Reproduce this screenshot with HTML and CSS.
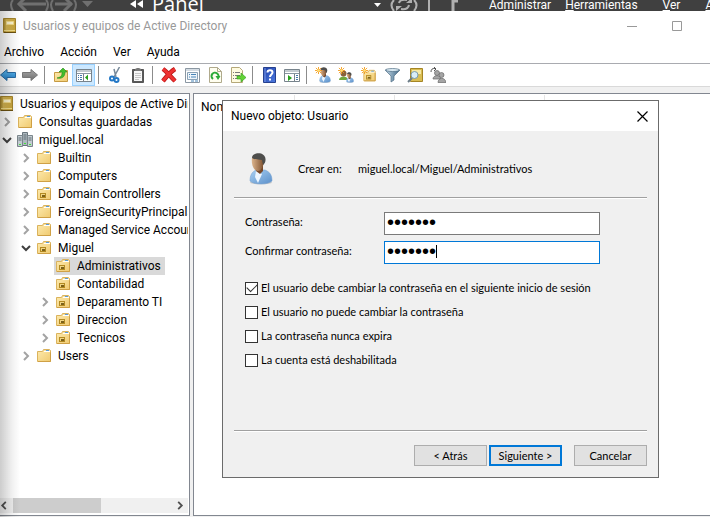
FILE: index.html
```html
<!DOCTYPE html>
<html lang="es">
<head>
<meta charset="utf-8">
<title>Usuarios y equipos de Active Directory</title>
<link rel="stylesheet" href="styles.css">
</head>
<body>
<svg class="defs" aria-hidden="true">
  <defs>
    <linearGradient id="gFolder" x1="0" y1="0" x2="1" y2="1"><stop offset="0" stop-color="#fdebb0"/><stop offset="1" stop-color="#f0ca70"/></linearGradient>
    <linearGradient id="gBook" x1="0" y1="0" x2="1" y2="0"><stop offset="0" stop-color="#a98a2c"/><stop offset=".25" stop-color="#d9b955"/><stop offset="1" stop-color="#c9a53c"/></linearGradient>
    <linearGradient id="gShirt" x1="0" y1="0" x2="1" y2="1"><stop offset="0" stop-color="#a9d0f2"/><stop offset="1" stop-color="#5a8fca"/></linearGradient>
    <linearGradient id="gFace" x1="0" y1="0" x2="1" y2="0"><stop offset="0" stop-color="#dcb48c"/><stop offset="1" stop-color="#7c4e2c"/></linearGradient>
    <linearGradient id="gBlue" x1="0" y1="0" x2="0" y2="1"><stop offset="0" stop-color="#64c0f5"/><stop offset="1" stop-color="#1e78c2"/></linearGradient>
    <linearGradient id="gGrey" x1="0" y1="0" x2="0" y2="1"><stop offset="0" stop-color="#a9a9a9"/><stop offset="1" stop-color="#6e6e6e"/></linearGradient>
    <linearGradient id="gHelp" x1="0" y1="0" x2="1" y2="1"><stop offset="0" stop-color="#1d3fa8"/><stop offset="1" stop-color="#4f7be0"/></linearGradient>
    <linearGradient id="gFunnel" x1="0" y1="0" x2="1" y2="0"><stop offset="0" stop-color="#c6dcea"/><stop offset="1" stop-color="#3d6482"/></linearGradient>
  </defs>
  <symbol id="folder" viewBox="0 0 16 16"><path d="M1.500 3.500h5l1-2h6l1 1v11h-13z" fill="url(#gFolder)" stroke="#dbb35c"/><path d="M8 3.500h6" stroke="#fff"/><path d="M10 2.500h3" stroke="#5b9ad6"/><path d="M2 13.500h12.500v-9" fill="none" stroke="#cfa045"/></symbol>
  <symbol id="ou" viewBox="0 0 16 16"><use href="#folder"/><path d="M4 7h6v5H4z" fill="#b38a22"/><path d="M5 8h4v3H5z" fill="#f0d584"/><path d="M6 9h3v2H6z" fill="#7c611a"/></symbol>
  <symbol id="book" viewBox="0 0 14 16"><path d="M.500.5h12v14h-12z" fill="url(#gBook)" stroke="#a5852c"/><path d="M3.500 3.500h7v3h-7z" fill="#fff7d0" stroke="#f3dc8c"/><path d="M1 12.500h11" stroke="#f5e08c"/><path d="M1 14.500h12" stroke="#6c5210"/></symbol>
  <symbol id="domain" viewBox="0 0 16 16"><path d="M5.500.5h5v13h-5z" fill="#aeb9bf" stroke="#69757c"/><path d="M.5 3.500h5v11h-5zM10.500 3.500h5v11h-5z" fill="#c3ccd1" stroke="#7b868c"/><path d="M6.500 3h3M6.500 5h3M6.500 7h3M1.500 6h3M1.500 8h3M11.500 6h3M11.500 8h3" stroke="#5c6a72"/><path d="M2 12h2v1H2zM7 11h2v1H7zM12 12h2v1h-2z" fill="#41e03a"/></symbol>
  <symbol id="right" viewBox="0 0 14 10"><path d="M5 1l4 4-4 4" fill="none" stroke="#a3a3a3" stroke-width="2"/></symbol>
  <symbol id="down" viewBox="0 0 14 10"><path d="M3 3l4 4 4-4" fill="none" stroke="#404040" stroke-width="2"/></symbol>
  <symbol id="person" viewBox="0 0 24 32"><ellipse cx="12" cy="29.500" rx="11" ry="1.800" fill="#c9c9c9"/><path d="M1 28c0-6 2-9 6-11h9c5 2 7 5 7 11-4 4-18 4-22 0z" fill="url(#gShirt)" stroke="#6f9dce" stroke-width=".5"/><path d="M7 18l6 3-4 9-3-6z" fill="#edf6ff"/><path d="M6 13h8v5l-3 3-4-3z" fill="#77492a"/><path d="M3 5c2-3 12-3 12 2 0 6-3 11-6 11-4 0-7-6-6-13z" fill="url(#gFace)"/><path d="M3 5c0-6 13-7 13.500 1 .3 3-1 5-2.500 6l-1-5c-3-1-7 0-10-2z" fill="#4e4e4c"/></symbol>
  <symbol id="star" viewBox="0 0 8 8"><path d="M4 0v8M0 4h8M1 1l6 6M7 1L1 7" stroke="#f39a1c" stroke-width="1"/><circle cx="4" cy="4" r="1.500" fill="#ffe27a"/></symbol>
</svg>

<div class="desktop">
  <header class="server">
    <svg class="server-nav" viewBox="0 0 110 11" aria-hidden="true"><g fill="none" stroke="#707070" stroke-width="2"><path d="M13 0q-4 4 0 11M46 0q4 4 0 11M53 0q-4 4 0 11M74 0q4 4 0 11"/><path d="M19 4h27M55 4h17" stroke-width="3"/><path d="M26-3l-7 7 7 7M64-3l7 7-7 7" stroke-width="3"/></g><path d="M82 1h11l-5.500 6z" fill="#707070"/></svg>
    <svg class="server-back" viewBox="0 0 14 8" aria-hidden="true"><path d="M6 0v8L0 4zM13 0v8L7 4z" fill="#fff"/></svg>
    <span class="server-title">Panel</span>
    <svg class="server-tools" viewBox="0 0 110 11" aria-hidden="true"><path d="M9 3h7l-3.500 4z" fill="#fff"/><g fill="none" stroke="#b0b0b0" stroke-width="2"><path d="M29 0q-5 5 0 11M49 0q5 5 0 11M34 3q1-4 8-3M44 5q-1 5-8 4"/><path d="M64 0v11" /><path d="M88 0v11M87 1h6" stroke-width="3"/></g><path d="M41 3h6V-2zM37 6h-6v5z" fill="#b0b0b0"/></svg>
    <nav class="server-menu"><a href="#">Ad<u>m</u>inistrar</a><a href="#"><u>H</u>erramientas</a><a href="#"><u>V</u>er</a><a href="#"><u>A</u>yuda</a></nav>
  </header>

  <main class="window">
    <div class="titlebar">
      <svg class="title-icon" aria-hidden="true"><use href="#book"/></svg>
      <h1>Usuarios y equipos de Active Directory</h1>
      <button class="winbtn" aria-label="Minimizar"><svg viewBox="0 0 10 10"><path d="M0 5.500h10" stroke="#999"/></svg></button>
      <button class="winbtn" aria-label="Maximizar"><svg viewBox="0 0 10 10"><path d="M.5.5h9v9h-9z" fill="none" stroke="#999"/></svg></button>
    </div>
    <nav class="menubar"><a href="#">Archivo</a><a href="#">Acción</a><a href="#">Ver</a><a href="#">Ayuda</a></nav>
    <div class="toolbar">
      <button aria-label="Atrás"><svg viewBox="0 0 16 16"><path d="M.5 8L7 2.500v3h8.500v5H7v3z" fill="url(#gBlue)" stroke="#2b6ca3"/></svg></button>
      <button aria-label="Adelante"><svg viewBox="0 0 16 16"><path d="M15.500 8L9 2.500v3H.5v5H9v3z" fill="url(#gGrey)" stroke="#777"/></svg></button>
      <i class="sep"></i>
      <button aria-label="Subir un nivel"><svg viewBox="0 0 16 16"><path d="M1.500 5.500h6l1-2h6v11h-13z" fill="url(#gFolder)" stroke="#c69a42"/><path d="M4 11c5-1 5-3 5-6H6l4-4L14 5h-2c0 5-3 7-8 6z" fill="#43bd2c" stroke="#248c17" stroke-width=".6"/></svg></button>
      <button class="on" aria-label="Mostrar árbol"><svg viewBox="0 0 16 16"><path d="M.5 2.500h15v12H.5z" fill="#fff" stroke="#77838c"/><path d="M1 4h14M1 6.500h14" stroke="#8796a2"/><path d="M7.500 7v7" stroke="#77838c"/><path d="M2 8.500h1m1 0h2M2 10.500h1m1 0h2M2 12.500h1m1 0h2" stroke="#4478ab"/><path d="M12 7.500v6l-3-3z" fill="#28a11c"/></svg></button>
      <i class="sep"></i>
      <button aria-label="Cortar"><svg viewBox="0 0 16 16"><path d="M12.500 0L7 10M7 2l2 8" stroke="#77899a" stroke-width="1.500"/><g fill="none" stroke="#2478c6" stroke-width="2"><circle cx="5" cy="11.500" r="2"/><circle cx="9.500" cy="13" r="2"/></g></svg></button>
      <button aria-label="Pegar"><svg viewBox="0 0 16 16"><path d="M2.500 2.500h11v13h-11z" fill="#5a5a5a" stroke="#555"/><path d="M4 4h8v10H4z" fill="#f6f6f6"/><path d="M5 4V2l2-1h2l2 1v2z" fill="#777"/><path d="M5 6.500h6M5 8.500h6M5 10.500h6M5 12.500h4" stroke="#c5c5c5"/></svg></button>
      <i class="sep"></i>
      <button aria-label="Eliminar"><svg viewBox="0 0 16 16"><path d="M2 2c4 3 7 7 12 12M14 2C9 5 6 9 2 14" stroke="#b81616" stroke-width="4.500" fill="none"/><path d="M2 2c4 3 7 7 12 12M14 2C9 5 6 9 2 14" stroke="#ed3131" stroke-width="3" fill="none"/></svg></button>
      <button aria-label="Propiedades"><svg viewBox="0 0 16 16"><path d="M1.500 1.500h14v14h-14z" fill="#fff" stroke="#8b97a2"/><path d="M2 3h13" stroke="#aabac8"/><path d="M3.500 5.500h10v7h-10z" fill="#eef5fb" stroke="#8aa2b6"/><path d="M5 7.500h1m1 0h5M5 10h1m1 0h5" stroke="#4784b8"/><path d="M7 14h3m1 0h3" stroke="#4784b8"/></svg></button>
      <button aria-label="Actualizar"><svg viewBox="0 0 16 16"><path d="M2.500.5h8l4 4v11h-12z" fill="#fffef0" stroke="#b0aa8c"/><path d="M10.500.5v4h4" fill="none" stroke="#b0aa8c"/><path d="M6 12a3.500 3.500 0 1 1 5-1" fill="none" stroke="#2cab38" stroke-width="2"/><path d="M8.500 9h5L11 13z" fill="#2cab38"/></svg></button>
      <button aria-label="Exportar lista"><svg viewBox="0 0 16 16"><path d="M1.500.5h8l3 3v12h-11z" fill="#fffbe0" stroke="#b5a878"/><path d="M3 5.500h1m1 0h5M3 8.500h1m1 0h5M3 11.500h1m1 0h5" stroke="#79797a"/><path d="M7 9h4V6l5 4.500-5 4.500v-3H7z" fill="#63d337" stroke="#2f9c1c" stroke-width=".6"/></svg></button>
      <i class="sep"></i>
      <button aria-label="Ayuda"><svg viewBox="0 0 16 16"><path d="M2.500.5h12v15h-12z" fill="url(#gHelp)" stroke="#26418f"/><path d="M4 1v14" stroke="#7d9be8"/><path d="M6.500 5.500c0-3 5-3 5 0 0 2-2.500 2-2.500 4.500M9 11.500v2" fill="none" stroke="#fff" stroke-width="2"/></svg></button>
      <button aria-label="Panel de acciones"><svg viewBox="0 0 16 16"><path d="M.5 2.500h15v12H.5z" fill="#fff" stroke="#77838c"/><path d="M1 4h14M1 6.500h14" stroke="#8796a2"/><path d="M10.500 7v7" stroke="#77838c"/><path d="M12 8.500h2M12 10.500h2M12 12.500h2" stroke="#4478ab"/><path d="M4 8v6l4-3z" fill="#28a11c"/></svg></button>
      <i class="sep"></i>
      <button aria-label="Nuevo usuario"><svg viewBox="0 0 16 16"><use href="#person" x="4" width="12" height="16"/><use href="#star" width="7" height="7"/></svg></button>
      <button aria-label="Nuevo grupo"><svg viewBox="0 0 16 16"><path d="M1 13c0-4 8-5 9 0z" fill="#71a83d"/><circle cx="5.500" cy="6.500" r="3" fill="#87613b"/><use href="#person" x="8" y="5" width="8" height="11"/><use href="#star" width="7" height="7"/></svg></button>
      <button aria-label="Nueva unidad organizativa"><svg viewBox="0 0 16 16"><use href="#ou" x="1" y="2" width="15" height="14"/><use href="#star" width="7" height="7"/></svg></button>
      <button aria-label="Filtro"><svg viewBox="0 0 16 16"><path d="M1 3l6 6v6l3-2V9l6-6z" fill="url(#gFunnel)" stroke="#527087" stroke-width=".7"/><ellipse cx="8.500" cy="3" rx="7" ry="1.500" fill="#d9e8f1" stroke="#527087" stroke-width=".7"/></svg></button>
      <button aria-label="Buscar"><svg viewBox="0 0 16 16"><path d="M3.500 1.500h12v13h-12z" fill="#d9bd53" stroke="#a58524"/><path d="M5 3h9v4H5z" fill="#f7e9a5"/><circle cx="7.500" cy="8" r="3.500" fill="#d9edf7" stroke="#789aac"/><path d="M5 11l-4 4" stroke="#6b7c87" stroke-width="2"/></svg></button>
      <button aria-label="Agregar a un grupo"><svg viewBox="0 0 16 16"><path d="M1 5q0-4 4-3.500M4 0l2 2-2 2" fill="none" stroke="#555"/><g fill="#a5a5a5" stroke="#686868" stroke-width=".7"><path d="M3 12c0-4 7-5 8 0z"/><circle cx="7" cy="6" r="2.500"/><path d="M8 15.500c0-5 7-6 8 0z"/><circle cx="11.500" cy="8" r="2.500"/></g></svg></button>
    </div>

    <div class="panes">
      <section class="tree-pane">
        <ul class="tree">
          <li class="root"><svg class="ico"><use href="#book"/></svg><span>Usuarios y equipos de Active Directory</span></li>
          <li><svg class="arw"><use href="#right"/></svg><svg class="ico"><use href="#folder"/></svg><span>Consultas guardadas</span></li>
          <li><svg class="arw"><use href="#down"/></svg><svg class="ico"><use href="#domain"/></svg><span>miguel.local</span></li>
          <li class="l2"><svg class="arw"><use href="#right"/></svg><svg class="ico"><use href="#folder"/></svg><span>Builtin</span></li>
          <li class="l2"><svg class="arw"><use href="#right"/></svg><svg class="ico"><use href="#folder"/></svg><span>Computers</span></li>
          <li class="l2"><svg class="arw"><use href="#right"/></svg><svg class="ico"><use href="#ou"/></svg><span>Domain Controllers</span></li>
          <li class="l2"><svg class="arw"><use href="#right"/></svg><svg class="ico"><use href="#folder"/></svg><span>ForeignSecurityPrincipals</span></li>
          <li class="l2"><svg class="arw"><use href="#right"/></svg><svg class="ico"><use href="#folder"/></svg><span>Managed Service Accounts</span></li>
          <li class="l2"><svg class="arw"><use href="#down"/></svg><svg class="ico"><use href="#ou"/></svg><span>Miguel</span></li>
          <li class="l3"><i class="arw"></i><b class="selected"><svg class="ico"><use href="#ou"/></svg><span>Administrativos</span></b></li>
          <li class="l3"><i class="arw"></i><svg class="ico"><use href="#ou"/></svg><span>Contabilidad</span></li>
          <li class="l3"><svg class="arw"><use href="#right"/></svg><svg class="ico"><use href="#ou"/></svg><span>Deparamento TI</span></li>
          <li class="l3"><svg class="arw"><use href="#right"/></svg><svg class="ico"><use href="#ou"/></svg><span>Direccion</span></li>
          <li class="l3"><svg class="arw"><use href="#right"/></svg><svg class="ico"><use href="#ou"/></svg><span>Tecnicos</span></li>
          <li class="l2"><svg class="arw"><use href="#right"/></svg><svg class="ico"><use href="#folder"/></svg><span>Users</span></li>
        </ul>
        <div class="scrollbar" aria-hidden="true">
          <svg viewBox="0 0 8 10"><path d="M6 1L2 5l4 4" fill="none" stroke="#505050" stroke-width="2"/></svg>
          <div class="track"><div class="thumb"></div></div>
          <svg viewBox="0 0 8 10"><path d="M2 1l4 4-4 4" fill="none" stroke="#505050" stroke-width="2"/></svg>
        </div>
      </section>
      <section class="list-pane">
        <div class="list-head"><span>Nombre</span><span></span><span></span></div>
      </section>
    </div>
    <div class="edge-shade"></div>
  </main>

  <form class="dialog" role="dialog" aria-labelledby="dlg-title">
    <div class="dialog-title">
      <h2 id="dlg-title">Nuevo objeto: Usuario</h2>
      <button type="button" class="close" aria-label="Cerrar"><svg viewBox="0 0 11 11"><path d="M.5.5l10 10M10.500.5l-10 10" stroke="#000" stroke-width="1.200"/></svg></button>
    </div>
    <div class="dialog-body">
      <div class="where"><svg class="avatar" aria-hidden="true"><use href="#person"/></svg><span class="where-label">Crear en:</span><span>miguel.local/Miguel/Administrativos</span></div>
      <hr>
      <div class="fields">
        <label for="pw1">Contraseña:</label><input id="pw1" type="password" value="1234567">
        <label for="pw2">Confirmar contraseña:</label><div class="focused"><input id="pw2" type="password" value="1234567"><i class="caret"></i></div>
      </div>
      <div class="checks">
        <label><input type="checkbox" checked>El usuario debe cambiar la contraseña en el siguiente inicio de sesión</label>
        <label><input type="checkbox">El usuario no puede cambiar la contraseña</label>
        <label><input type="checkbox">La contraseña nunca expira</label>
        <label><input type="checkbox">La cuenta está deshabilitada</label>
      </div>
      <hr>
      <div class="actions"><button type="button">&lt; Atrás</button><button type="button" class="primary">Siguiente &gt;</button><button type="button" class="cancel">Cancelar</button></div>
    </div>
  </form>
</div>
</body>
</html>
```

FILE: styles.css
```css
* { box-sizing: border-box; }
body { margin: 0; font: 12px/18px Roboto, "Open Sans", sans-serif; color: #000; background: #fff; }
a { color: inherit; text-decoration: none; }
button { font: inherit; color: inherit; margin: 0; padding: 0; border: 0; background: none; }
h1, h2 { margin: 0; font-size: 12px; font-weight: 400; }
svg { display: block; flex: none; }
.defs { position: absolute; width: 0; height: 0; }

.desktop { position: relative; height: 100vh; overflow: hidden; display: flex; flex-direction: column; }

.server { height: 11px; flex: none; overflow: hidden; background: #404040; color: #fff; display: flex; }
.server-nav { width: 110px; height: 11px; }
.server-back { width: 14px; height: 8px; margin: 0 8px 0 20px; }
.server-title { font: 20px/20px "Open Sans", sans-serif; margin-top: -6px; }
.server-tools { width: 110px; height: 11px; margin-left: auto; }
.server-menu { display: flex; gap: 14px; line-height: 14px; margin: -2px 0 0 14px; width: 221px; flex: none; overflow: hidden; }
.server-menu a:nth-child(n+3) { margin-left: 11px; }

.window { position: relative; flex: 1; min-height: 0; display: flex; flex-direction: column; background: #fff; }
.titlebar { height: 29px; flex: none; display: flex; align-items: center; padding-left: 3px; }
.titlebar h1 { flex: 1; margin-left: 6px; color: #999; }
.title-icon { width: 14px; height: 16px; }
.winbtn { width: 45px; height: 29px; display: grid; place-items: center; }
.winbtn:last-child { margin-right: 11px; }
.winbtn svg { width: 10px; height: 10px; }
.menubar { height: 23px; flex: none; display: flex; gap: 16px; padding: 3px 4px; }
.toolbar { height: 24px; flex: none; display: flex; align-items: center; border-top: 1px solid #a9abb0; border-bottom: 1px solid #d9d9d9; }
.toolbar button { width: 23px; height: 22px; display: grid; place-items: center; }
.toolbar button:first-child { width: 18px; justify-items: start; }
.toolbar svg { width: 16px; height: 16px; }
.toolbar .on { background: #cce8ff; border: 1px solid #99d1ff; }
.sep { width: 1px; height: 18px; background: #8c8c8c; margin: 0 4px 0 3px; }

.panes { flex: 1; min-height: 0; display: grid; grid-template-columns: 190px 1fr; gap: 3px; padding: 6px 0 1px; background: #f0f0f0; }
.tree-pane { border: 1px solid #828790; border-left: 0; background: #fff; display: flex; flex-direction: column; padding: 1px 1px 1px 0; min-width: 0; overflow: hidden; }
.tree { list-style: none; margin: 0; padding: 0; flex: 1; overflow: hidden; }
.tree li { display: flex; align-items: center; height: 18px; white-space: nowrap; }
.tree .l2 { padding-left: 19px; }
.tree .l3 { padding-left: 38px; }
.arw { width: 14px; height: 10px; margin-right: 3px; flex: none; }
.ico { width: 16px; height: 16px; margin-right: 6px; }
.root .ico { width: 14px; }
.selected { display: flex; align-items: center; font-weight: 400; background: #d9d9d9; margin-left: -1px; padding: 0 4px 0 1px; height: 18px; }
.scrollbar { height: 15px; display: flex; align-items: center; background: #f0f0f0; margin-bottom: 1px; }
.scrollbar svg { width: 8px; height: 9px; }
.scrollbar svg:last-child { margin-right: 4px; }
.track { flex: 1; height: 15px; margin: 0 5px; }
.thumb { width: 56%; height: 15px; background: #cdcdcd; }

.list-pane { border: 1px solid #828790; border-right: 0; background: #fff; }
.list-head { display: grid; grid-template-columns: 101px 100px 150px; margin-top: 1px; height: 24px; }
.list-head span { border-right: 1px solid #e5e5e5; padding: 3px 7px; }
.edge-shade { position: absolute; left: 0; top: 0; bottom: 0; width: 20px; pointer-events: none; background: linear-gradient(to right, rgba(0,0,0,.2), rgba(0,0,0,.06) 60%, transparent); }

.dialog { position: absolute; left: 222px; top: 100px; width: 437px; border: 1px solid #6b6b6b; background: #f0f0f0; }
.dialog-title { height: 30px; display: flex; align-items: center; justify-content: space-between; padding: 0 10px 0 8px; background: #fff; }
.close svg { width: 11px; height: 11px; }
.dialog-body { padding: 21px 11px 11px; font: 11px/14px Lato, "Liberation Sans", sans-serif; }
.where { display: flex; align-items: center; height: 34px; padding-left: 15px; }
.avatar { width: 24px; height: 32px; margin-right: 25px; }
.where-label { width: 60px; }
hr { border: 0; border-top: 1px solid #a0a0a0; border-bottom: 1px solid #fff; margin: 11px 0 0; }
.fields { display: grid; grid-template-columns: 139px 216px; row-gap: 6px; align-items: center; padding: 13px 11px 0; }
.fields label { padding-bottom: 3px; }
.fields input { width: 100%; height: 23px; border: 1px solid #7a7a7a; background: #fff; padding: 0 2px 2px; font: 20px/20px "Liberation Sans", Arial, sans-serif; outline: 0; display: block; }
.focused { position: relative; }
.focused input { border-color: #0078d7; }
.caret { position: absolute; left: 52px; top: 4px; width: 1px; height: 13px; background: #000; }
.checks { display: grid; row-gap: 10px; padding: 17px 11px 0; justify-items: start; }
.checks label { display: flex; align-items: center; height: 14px; }
.checks input { appearance: none; width: 13px; height: 13px; margin: 0 3px 0 0; border: 1px solid #333; background: #fff; }
.checks input:checked { display: grid; place-items: center; }
.checks input:checked::before { content: ""; width: 9px; height: 5px; border: solid #333; border-width: 0 0 1px 1px; transform: rotate(-45deg) translate(1px, -1px); }
.checks + hr { margin-top: 63px; }
.actions { display: flex; justify-content: flex-end; gap: 2px; padding-top: 13px; }
.actions button { width: 73px; height: 21px; border: 1px solid #adadad; background: #e1e1e1; }
.actions .primary { border: 2px solid #0078d7; }
.actions .cancel { margin-left: 10px; }
```
